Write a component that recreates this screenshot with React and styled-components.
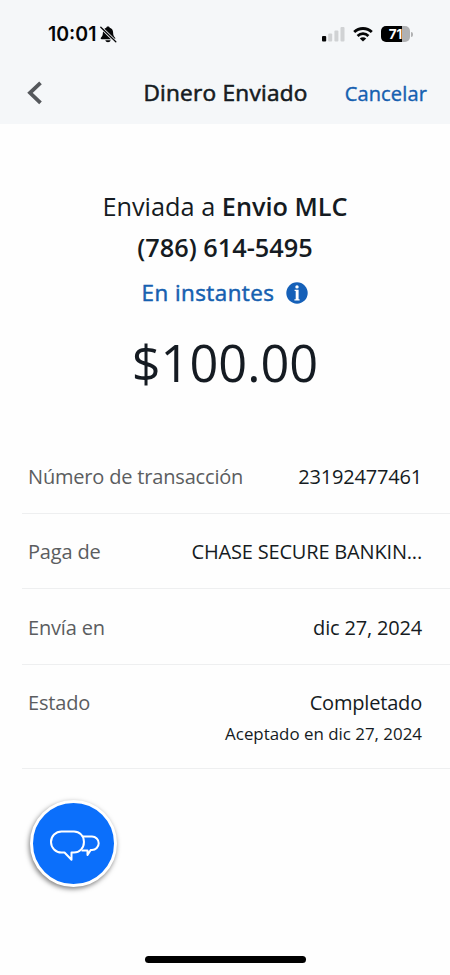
import React from 'react'
import styled, { createGlobalStyle } from 'styled-components'

const GlobalStyle = createGlobalStyle`
* {
  box-sizing: border-box;
}
body {
  margin: 0;
  background: #fefefe;
  font-family: "Open Sans", "Noto Sans", sans-serif;
  color: #151b22;
}
`

const Screen = styled.div`
width: 450px;
height: 975px;
display: flex;
flex-direction: column;
overflow: hidden;
background: #fefefe;
white-space: nowrap;
`

const Header = styled.header`
height: 124px;
flex-shrink: 0;
background: #f5f7f9;
`

const StatusBar = styled.div`
height: 68px;
padding: 0 37px 0 48px;
display: flex;
align-items: center;
justify-content: space-between;
`

const Clock = styled.div`
display: flex;
align-items: center;
gap: 4px;
font-family: Inter, sans-serif;
font-size: 19.5px;
line-height: 24px;
font-weight: 600;
color: #050607;
`

const Indicators = styled.div`
display: flex;
align-items: center;
gap: 8px;
`

const Battery = styled.div`
display: flex;
align-items: center;
gap: 1px;
`

const BatteryBody = styled.div`
width: 29px;
height: 16px;
border-radius: 5px;
background: linear-gradient(to right, #000 ${({level}) => level}%, #b0b1b3 ${({level}) => level}%);
color: #fff;
font-family: Inter, sans-serif;
font-size: 13.5px;
font-weight: 700;
line-height: 16px;
text-align: center;
`

const BatteryTip = styled.div`
width: 2px;
height: 5px;
border-radius: 0 2px 2px 0;
background: #b0b1b3;
`

const NavBar = styled.nav`
height: 50px;
padding: 0 23px 0 27px;
display: grid;
grid-template-columns: 97px 1fr 100px;
align-items: center;
`

const BackButton = styled.button`
width: 16px;
height: 24px;
padding: 0;
border: 0;
background: none;
display: flex;
`

// the thin stroke gives a medium weight, Open Sans only has regular and semibold here
const Title = styled.h1`
margin: 0;
font-size: 22.6px;
line-height: 30px;
font-weight: 400;
-webkit-text-stroke: 0.6px currentColor;
text-align: center;
letter-spacing: 0.25px;
`

const Cancel = styled.a`
padding-top: 1px;
font-size: 20px;
line-height: 28px;
-webkit-text-stroke: 0.4px currentColor;
letter-spacing: 0.15px;
color: #1560b0;
text-align: right;
`

const Summary = styled.section`
height: 314px;
padding-top: 62px;
display: flex;
flex-direction: column;
align-items: center;
flex-shrink: 0;
`

const Recipient = styled.div`
font-size: 25.3px;
line-height: 41px;
font-weight: ${({bold}) => bold ? 600 : 400};
`

const Strong = styled.span`
font-weight: 600;
`

const Timing = styled.div`
margin-top: 4px;
height: 41px;
display: flex;
align-items: center;
gap: 12px;
font-size: 22.4px;
line-height: 40px;
-webkit-text-stroke: 0.5px currentColor;
letter-spacing: 0.45px;
color: #1560b0;
`

const Amount = styled.div`
margin-top: 16px;
font-size: 50.5px;
line-height: 68px;
`

const Details = styled.dl`
margin: 0 0 0 22px;
`

const Row = styled.div`
height: ${({tall}) => tall ? 104.5 : 75.5}px;
padding: 22.5px 28px 0 6px;
display: flex;
justify-content: space-between;
border-bottom: 1.5px solid #eeeff0;
font-size: 20px;
line-height: 31px;
letter-spacing: -0.18px;
`

const Label = styled.dt`
color: #5b5d60;
`

const Value = styled.dd`
margin: 0;
text-align: right;
`

const Note = styled.div`
font-size: 16.9px;
line-height: 31px;
letter-spacing: 0;
`

const ChatButton = styled.button`
width: 87px;
height: 87px;
margin: 31px 0 0 30px;
padding: 3px 0 0 2px;
flex-shrink: 0;
border: 3px solid #fff;
border-radius: 50%;
background: #0b6ffb;
box-shadow: -1px 2px 5px rgba(0, 0, 0, 0.5);
display: flex;
align-items: center;
justify-content: center;
`

const HomeIndicator = styled.div`
width: 161px;
height: 7px;
margin: auto auto 12px;
border-radius: 4px;
background: #000;
`

const BellOff = () => (
  <svg width="17" height="17" viewBox="0 0 17 17">
    <path d="M8 .5c-1 0-1.500.5-1.700 1.200C3.900 2.400 2.900 4.200 2.900 6.600c0 2.700-.8 3.900-2 5.200-.5.7-.2 1.500.8 1.500h12.600c1 0 1.300-.8.8-1.500-1.200-1.300-2-2.500-2-5.200 0-2.400-1-4.200-3.400-4.900C9.500 1 9 .5 8 .5z" fill="#050607" />
    <path d="M5.300 14.200h5.400c-.3 1.300-1.400 2-2.700 2s-2.400-.7-2.700-2z" fill="#050607" />
    <path d="M.8 1.300l15 14.500" stroke="#f5f7f9" strokeWidth="3" />
    <path d="M.8 1.300l15 14.500" stroke="#050607" strokeWidth="1.300" strokeLinecap="round" />
  </svg>
)

const Signal = () => (
  <svg width="23" height="15" viewBox="0 0 23 15">
    <rect x="0" y="9" width="4.200" height="5.500" rx="1" fill="#050607" />
    <rect x="6.200" y="6.500" width="4" height="8" rx="1" fill="#d0d2d4" />
    <rect x="12.400" y="3.500" width="4" height="11" rx="1" fill="#d0d2d4" />
    <rect x="18.500" y="0" width="4" height="14.500" rx="1" fill="#d0d2d4" />
  </svg>
)

const Wifi = () => (
  <svg width="20" height="15" viewBox="0 0 20 15" fill="none" stroke="#050607" strokeWidth="2.800">
    <path d="M1.200 5.100a12.600 12.600 0 0 1 17.600 0" />
    <path d="M4.600 8.900a7.700 7.700 0 0 1 10.800 0" />
    <path d="M10 14.600l-3.200-3.100a4.600 4.600 0 0 1 6.400 0z" fill="#050607" stroke="none" />
  </svg>
)

const ChevronLeft = () => (
  <svg width="16" height="24" viewBox="0 0 16 24" fill="none" stroke="#55585c" strokeWidth="3.800">
    <path d="M13.500 1.800L3 11.800l10.500 10" />
  </svg>
)

const Info = () => (
  <svg width="22" height="22" viewBox="0 0 22 22">
    <circle cx="11" cy="11" r="10.700" fill="#1560b8" />
    <circle cx="11" cy="4.900" r="1.700" fill="#fff" />
    <path d="M8.600 7.800h4v9.500h1v1.200H8.400v-1.200h1.300V9H8.600z" fill="#fff" />
  </svg>
)

const Chat = () => (
  <svg width="50" height="32" viewBox="0 0 50 32" fill="none" stroke="#fff" strokeWidth="2" strokeLinejoin="round">
    <path d="M11.500 2.500H24a9.900 9.900 0 0 1 9.900 9.900v1.200A9.900 9.900 0 0 1 24 23.500h-2.500v7.300l-7-7.300h-3a10.500 10.500 0 0 1 0-21z" />
    <path d="M33 7.500h9a6.700 6.700 0 0 1 0 13.400h-1.200L37.500 26v-4.500h-6" />
  </svg>
)

// rows of the transaction table
const rows = [
  { label: 'Número de transacción', value: '23192477461' },
  { label: 'Paga de', value: 'CHASE SECURE BANKIN...' },
  { label: 'Envía en', value: 'dic 27, 2024' },
  { label: 'Estado', value: 'Completado', note: 'Aceptado en dic 27, 2024' },
]

const App = () => {
  return (
    <Screen>
      <GlobalStyle />
      <Header>
        <StatusBar>
          <Clock>10:01 <BellOff /></Clock>
          <Indicators>
            <Signal />
            <Wifi />
            <Battery>
              <BatteryBody level={71}>71</BatteryBody>
              <BatteryTip />
            </Battery>
          </Indicators>
        </StatusBar>
        <NavBar>
          <BackButton><ChevronLeft /></BackButton>
          <Title>Dinero Enviado</Title>
          <Cancel>Cancelar</Cancel>
        </NavBar>
      </Header>
      <Summary>
        <Recipient>Enviada a <Strong>Envio MLC</Strong></Recipient>
        <Recipient bold>(786) 614-5495</Recipient>
        <Timing>En instantes <Info /></Timing>
        <Amount>$100.00</Amount>
      </Summary>
      <Details>
        {rows.map((row) => (
          <Row key={row.label} tall={row.note}>
            <Label>{row.label}</Label>
            <Value>
              {row.value}
              {row.note && <Note>{row.note}</Note>}
            </Value>
          </Row>
        ))}
      </Details>
      <ChatButton><Chat /></ChatButton>
      <HomeIndicator />
    </Screen>
  )
}

export default App
